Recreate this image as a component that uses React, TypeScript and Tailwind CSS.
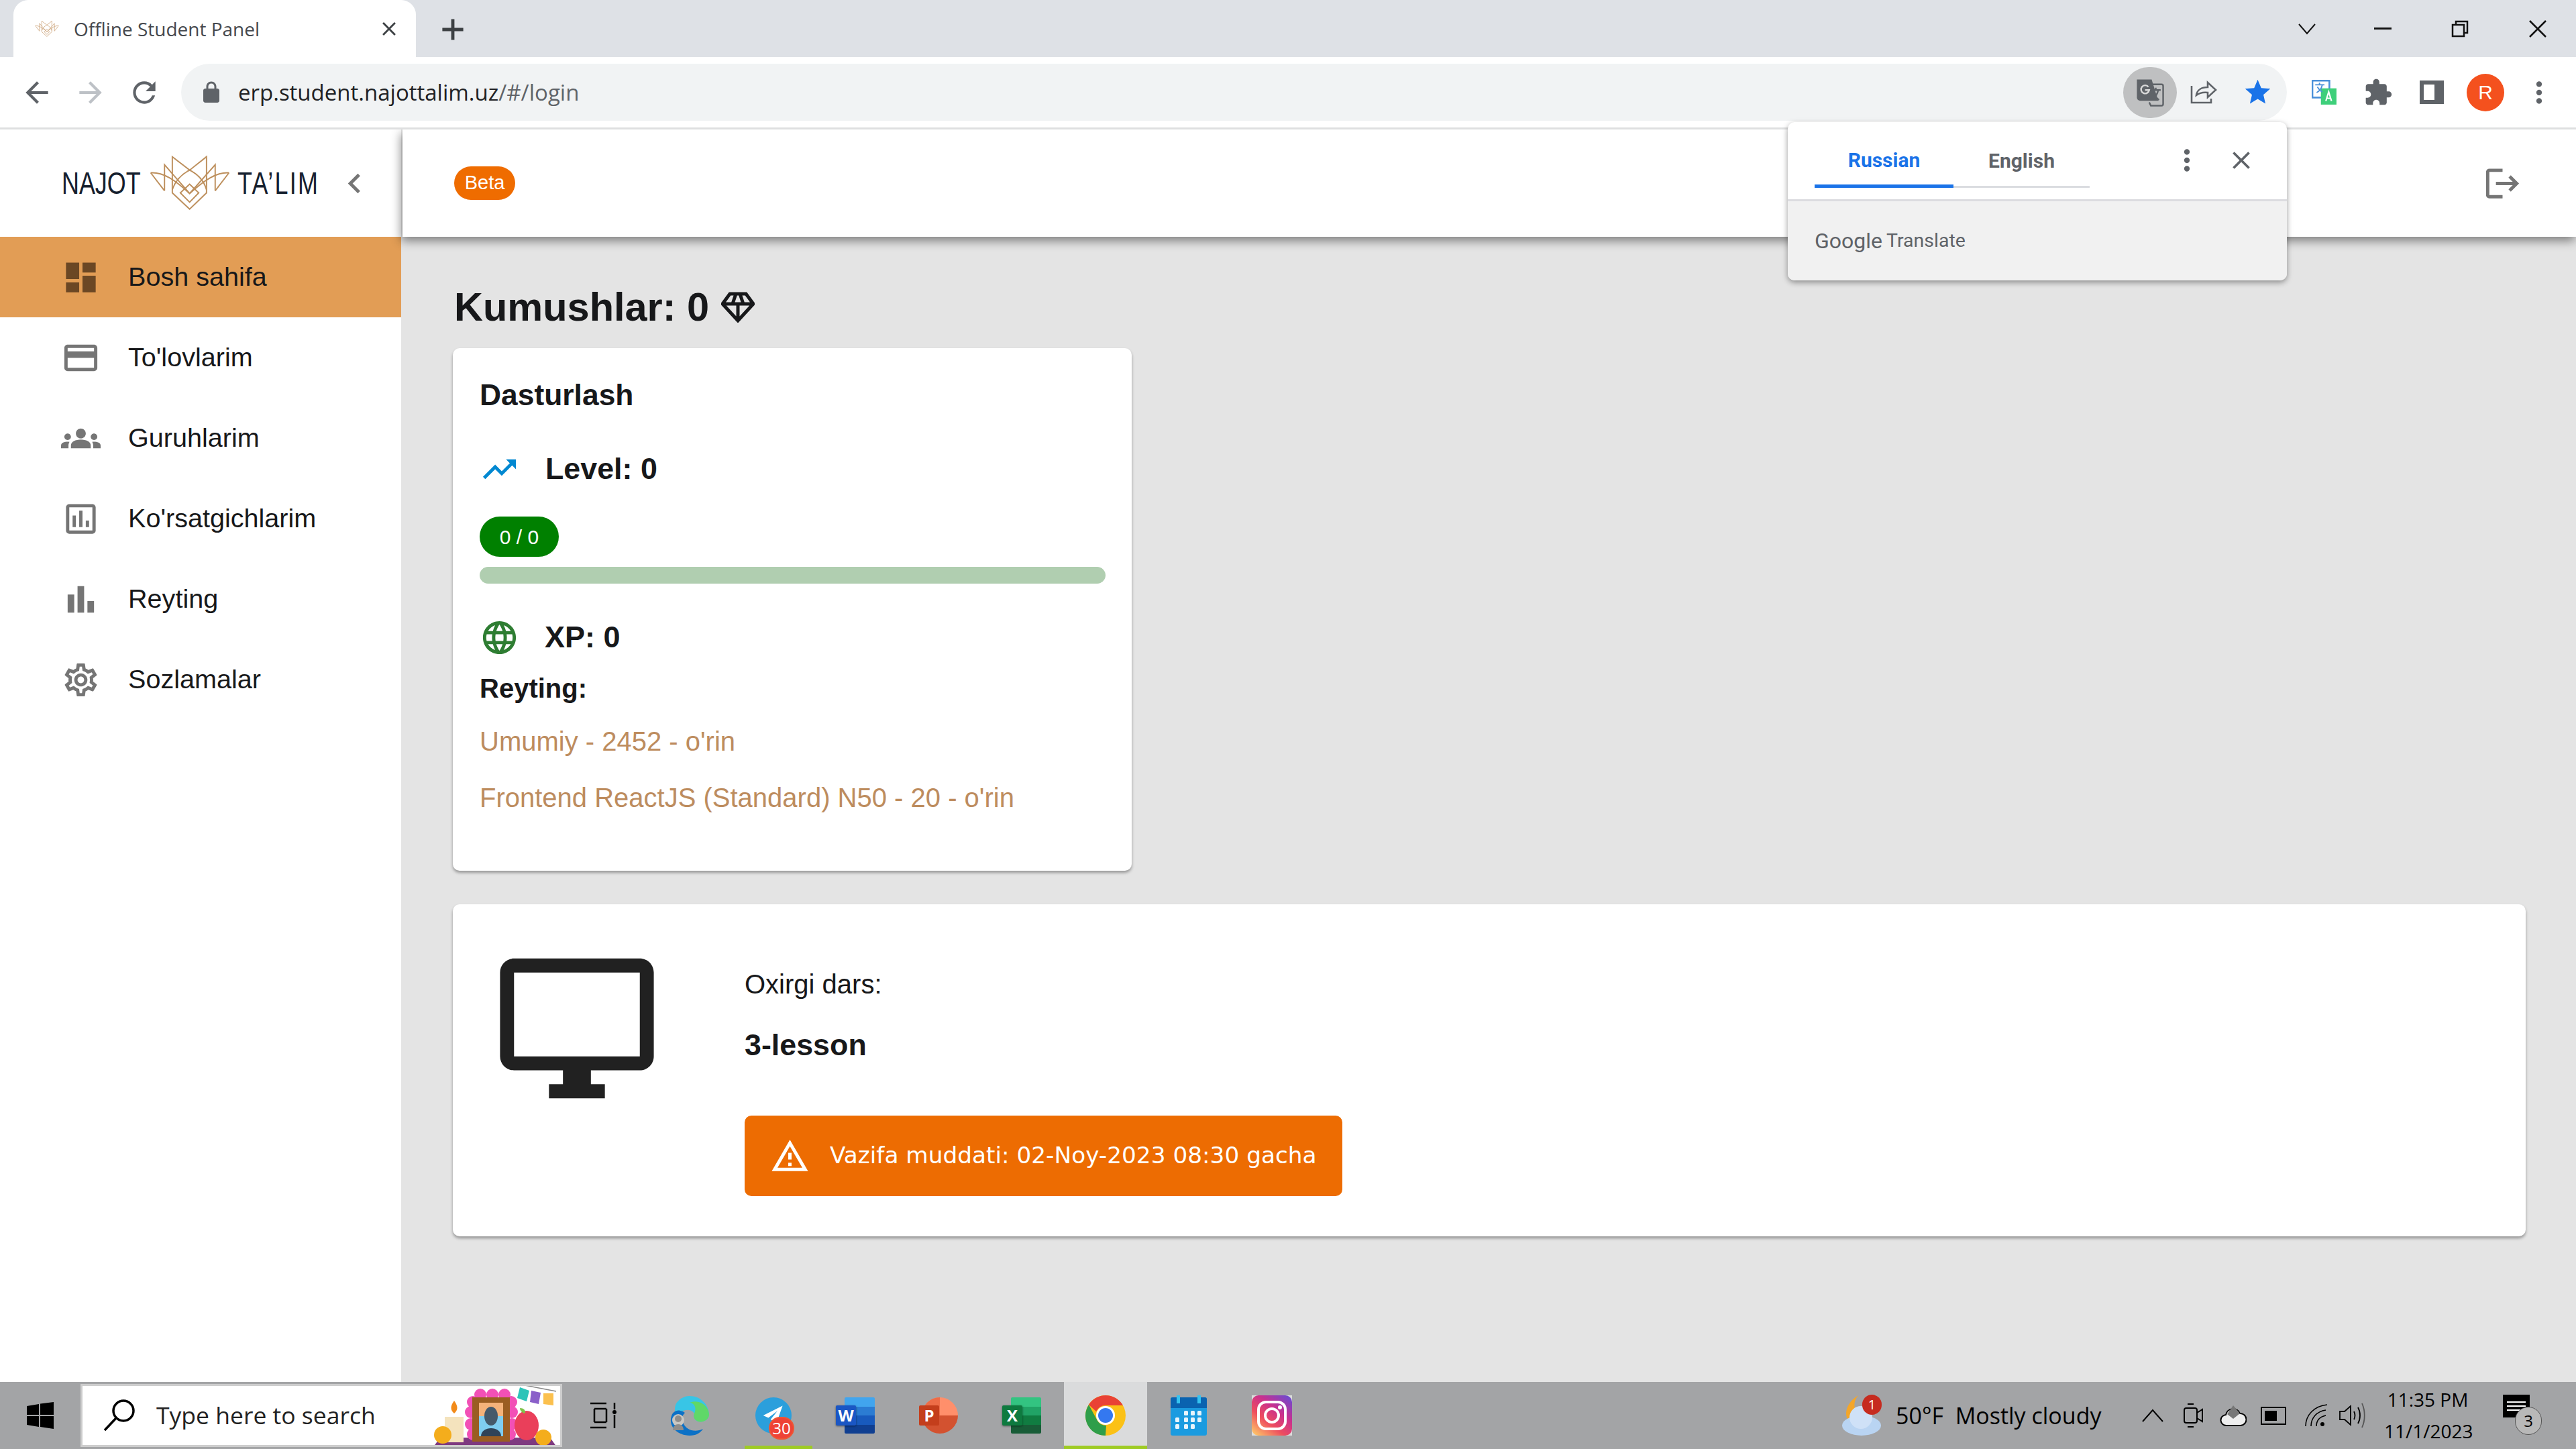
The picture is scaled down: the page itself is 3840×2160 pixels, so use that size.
const sans = "font-['Liberation_Sans',Arial,sans-serif]";
const ui = "font-['Open_Sans','Noto_Sans',sans-serif]";

function Mui({ d, size = 59, className = "" }: { d: string; size?: number; className?: string }) {
  return (
    <svg viewBox="0 0 24 24" width={size} height={size} className={`shrink-0 fill-current ${className}`}>
      <path d={d} />
    </svg>
  );
}

const icons = {
  dashboard: "M3 13h8V3H3v10zm0 8h8v-6H3v6zm10 0h8V11h-8v10zm0-18v6h8V3h-8z",
  card: "M20 4H4c-1.11 0-1.99.89-1.99 2L2 18c0 1.11.89 2 2 2h16c1.11 0 2-.89 2-2V6c0-1.11-.89-2-2-2zm0 14H4v-6h16v6zm0-10H4V6h16v2z",
  groups:
    "M12 12.75c1.63 0 3.07.39 4.24.9 1.08.48 1.76 1.56 1.76 2.73V18H6v-1.61c0-1.18.68-2.26 1.76-2.73 1.17-.52 2.61-.91 4.24-.91zM4 13c1.1 0 2-.9 2-2s-.9-2-2-2-2 .9-2 2 .9 2 2 2zm1.13 1.1c-.37-.06-.74-.1-1.13-.1-.99 0-1.93.21-2.78.58C.48 14.9 0 15.62 0 16.43V18h4.5v-1.61c0-.83.23-1.61.63-2.29zM20 13c1.1 0 2-.9 2-2s-.9-2-2-2-2 .9-2 2 .9 2 2 2zm4 3.43c0-.81-.48-1.53-1.22-1.85-.85-.37-1.79-.58-2.78-.58-.39 0-.76.04-1.13.1.4.68.63 1.46.63 2.29V18H24v-1.57zM12 6c1.66 0 3 1.34 3 3s-1.34 3-3 3-3-1.34-3-3 1.34-3 3-3z",
  assessment: "M19 3H5c-1.1 0-2 .9-2 2v14c0 1.1.9 2 2 2h14c1.1 0 2-.9 2-2V5c0-1.1-.9-2-2-2zm0 16H5V5h14v14zM7 10h2v7H7zm4-3h2v10h-2zm4 6h2v4h-2z",
  bars: "M4 9h4v11H4zm12 4h4v7h-4zm-6-9h4v16h-4z",
  settings:
    "M19.43 12.98c.04-.32.07-.64.07-.98 0-.34-.03-.66-.07-.98l2.11-1.65c.19-.15.24-.42.12-.64l-2-3.46c-.09-.16-.26-.25-.44-.25-.06 0-.12.01-.17.03l-2.49 1c-.52-.4-1.08-.73-1.69-.98l-.38-2.65C14.46 2.18 14.25 2 14 2h-4c-.25 0-.46.18-.49.42l-.38 2.65c-.61.25-1.17.59-1.69.98l-2.49-1c-.06-.02-.12-.03-.18-.03-.17 0-.34.09-.43.25l-2 3.46c-.13.22-.07.49.12.64l2.11 1.65c-.04.32-.07.65-.07.98 0 .33.03.66.07.98l-2.11 1.65c-.19.15-.24.42-.12.64l2 3.46c.09.16.26.25.44.25.06 0 .12-.01.17-.03l2.49-1c.52.4 1.08.73 1.69.98l.38 2.65c.03.24.24.42.49.42h4c.25 0 .46-.18.49-.42l.38-2.65c.61-.25 1.17-.59 1.69-.98l2.49 1c.06.02.12.03.18.03.17 0 .34-.09.43-.25l2-3.46c.12-.22.07-.49-.12-.64l-2.11-1.65zm-1.98-1.71c.04.31.05.52.05.73 0 .21-.02.43-.05.73l-.14 1.13.89.7 1.08.84-.7 1.21-1.27-.51-1.04-.42-.9.68c-.43.32-.84.56-1.25.73l-1.06.43-.16 1.13-.2 1.35h-1.4l-.19-1.35-.16-1.13-1.06-.43c-.43-.18-.83-.41-1.23-.71l-.91-.7-1.06.43-1.27.51-.7-1.21 1.08-.84.89-.7-.14-1.13c-.03-.31-.05-.54-.05-.74s.02-.43.05-.73l.14-1.13-.89-.7-1.08-.84.7-1.21 1.27.51 1.04.42.9-.68c.43-.32.84-.56 1.25-.73l1.06-.43.16-1.13.2-1.35h1.39l.19 1.35.16 1.13 1.06.43c.43.18.83.41 1.23.71l.91.7 1.06-.43 1.27-.51.7 1.21-1.07.85-.89.7.14 1.13zM12 8c-2.21 0-4 1.79-4 4s1.79 4 4 4 4-1.79 4-4-1.79-4-4-4zm0 6c-1.1 0-2-.9-2-2s.9-2 2-2 2 .9 2 2-.9 2-2 2z",
  trending: "M16 6l2.29 2.29-4.88 4.88-4-4L2 16.59 3.41 18l6-6 4 4 6.3-6.29L22 12V6z",
  language:
    "M11.99 2C6.47 2 2 6.48 2 12s4.47 10 9.99 10C17.52 22 22 17.52 22 12S17.52 2 11.99 2zm6.93 6h-2.95c-.32-1.25-.78-2.45-1.38-3.56 1.84.63 3.37 1.91 4.33 3.56zM12 4.04c.83 1.2 1.48 2.53 1.91 3.96h-3.82c.43-1.43 1.08-2.76 1.91-3.96zM4.26 14C4.1 13.36 4 12.69 4 12s.1-1.36.26-2h3.38c-.08.66-.14 1.32-.14 2 0 .68.06 1.34.14 2H4.26zm.82 2h2.95c.32 1.25.78 2.45 1.38 3.56-1.84-.63-3.37-1.9-4.33-3.56zm2.95-8H5.08c.96-1.66 2.49-2.93 4.33-3.56C8.81 5.55 8.35 6.75 8.03 8zM12 19.96c-.83-1.2-1.48-2.53-1.91-3.96h3.82c-.43 1.43-1.08 2.76-1.91 3.96zM14.34 14H9.66c-.09-.66-.16-1.32-.16-2 0-.68.07-1.35.16-2h4.68c.09.65.16 1.32.16 2 0 .68-.07 1.34-.16 2zm.25 5.56c.6-1.11 1.06-2.31 1.38-3.56h2.95c-.96 1.65-2.49 2.93-4.33 3.56zM16.36 14c.08-.66.14-1.32.14-2 0-.68-.06-1.34-.14-2h3.38c.16.64.26 1.31.26 2s-.1 1.36-.26 2h-3.38z",
  desktop: "M21 2H3c-1.1 0-2 .9-2 2v12c0 1.1.9 2 2 2h7v2H8v2h8v-2h-2v-2h7c1.1 0 2-.9 2-2V4c0-1.1-.9-2-2-2zm0 14H3V4h18v12z",
  warning: "M12 5.99L19.53 19H4.47L12 5.99M12 2L1 21h22L12 2zm1 14h-2v2h2v-2zm0-6h-2v4h2v-4z",
  logout: "M17 7l-1.41 1.41L18.17 11H8v2h10.17l-2.58 2.58L17 17l5-5zM4 5h8V3H4c-1.1 0-2 .9-2 2v14c0 1.1.9 2 2 2h8v-2H4V5z",
  chevron: "M15.41 7.41 14 6l-6 6 6 6 1.41-1.41L10.83 12z",
  back: "M20 11H7.83l5.59-5.59L12 4l-8 8 8 8 1.41-1.41L7.83 13H20v-2z",
  forward: "M4 13h12.17l-5.59 5.59L12 20l8-8-8-8-1.41 1.41L16.17 11H4v2z",
  reload: "M17.65 6.35C16.2 4.9 14.21 4 12 4c-4.42 0-7.99 3.58-7.99 8s3.57 8 7.99 8c3.73 0 6.84-2.55 7.73-6h-2.08c-.82 2.33-3.04 4-5.65 4-3.31 0-6-2.69-6-6s2.69-6 6-6c1.66 0 3.14.69 4.22 1.78L13 11h7V4l-2.35 2.35z",
  lock: "M18 8h-1V6c0-2.76-2.24-5-5-5S7 3.24 7 6v2H6c-1.1 0-2 .9-2 2v10c0 1.1.9 2 2 2h12c1.1 0 2-.9 2-2V10c0-1.1-.9-2-2-2zM9 6c0-1.66 1.34-3 3-3s3 1.34 3 3v2H9V6z",
  star: "M12 17.27 18.18 21l-1.64-7.03L22 9.24l-7.19-.61L12 2 9.19 8.63 2 9.24l5.46 4.73L5.82 21z",
  puzzle: "M20.5 11H19V7c0-1.1-.9-2-2-2h-4V3.5C13 2.12 11.88 1 10.5 1S8 2.12 8 3.5V5H4c-1.1 0-1.99.9-1.99 2v3.8H3.5c1.49 0 2.7 1.21 2.7 2.7s-1.21 2.7-2.7 2.7H2V20c0 1.1.9 2 2 2h3.8v-1.5c0-1.49 1.21-2.7 2.7-2.7 1.49 0 2.7 1.21 2.7 2.7V22H17c1.1 0 2-.9 2-2v-4h1.5c1.38 0 2.5-1.12 2.5-2.5S21.88 11 20.5 11z",
  dots: "M12 8c1.1 0 2-.9 2-2s-.9-2-2-2-2 .9-2 2 .9 2 2 2zm0 2c-1.1 0-2 .9-2 2s.9 2 2 2 2-.9 2-2-.9-2-2-2zm0 6c-1.1 0-2 .9-2 2s.9 2 2 2 2-.9 2-2-.9-2-2-2z",
  close: "M19 6.41 17.59 5 12 10.59 6.41 5 5 6.41 10.59 12 5 17.59 6.41 19 12 13.41 17.59 19 19 17.59 13.41 12z",
};

function LogoMark({ width, height, color = "#bd8f5c", sw = 6 }: { width: number; height: number; color?: string; sw?: number }) {
  return (
    <svg viewBox="60 30 378 260" width={width} height={height} fill="none" stroke={color} strokeWidth={sw} className="shrink-0">
      <path d="M248 280 168 205V38l80 62 78-62v167z" />
      <path d="M132 195V75l116 133L366 75v120" />
      <path d="M68 112c55-4 110 30 180 96M430 112c-55-4-110 30-182 96M68 112l64 83M430 112l-64 83" />
      <path d="M168 190c14-40 40-70 80-90 40 20 66 50 78 90" />
      <path d="M248 248l-43-43 43-40 42 40z" />
    </svg>
  );
}

function Tabs() {
  return (
    <div className="h-[85px] bg-[#dee1e6] flex items-end pl-[20px] relative">
      <div className="w-[600px] h-[85px] bg-white rounded-t-[22px] flex items-center pl-[32px] pr-[23px]">
        <LogoMark width={36} height={44} color="#d3b08c" sw={10} />
        <span className={`${ui} ml-[22px] text-[28px] text-[#45484d] flex-1 whitespace-nowrap`}>Offline Student Panel</span>
        <Mui d={icons.close} size={34} className="text-[#3c4043]" />
      </div>
      <div className="ml-[37px] mb-[23px]">
        <svg viewBox="0 0 30 30" width="36" height="36" className="fill-[#3c4043]"><path d="M13 2h4v11h11v4H17v11h-4V17H2v-4h11z" /></svg>
      </div>
      <div className="flex-1" />
      <div className="flex h-[85px] items-center">
        <svg viewBox="0 0 30 20" width="30" height="20" fill="none" stroke="#111" strokeWidth="2" className="mr-[85px]"><path d="M3 3l12 14L27 3" /></svg>
        <div className="w-[26px] h-[3px] bg-[#111] mr-[88px]" />
        <svg viewBox="0 0 28 28" width="28" height="28" fill="none" stroke="#111" strokeWidth="2.5" className="mr-[88px]"><path d="M3 8h17v17H3zM8 8V3h17v17h-5" /></svg>
        <svg viewBox="0 0 28 28" width="28" height="28" fill="none" stroke="#111" strokeWidth="2.5" className="mr-[43px]"><path d="M2 2l24 24M26 2 2 26" /></svg>
      </div>
    </div>
  );
}

function Slot({ children }: { children: React.ReactNode }) {
  return <div className="w-[80px] h-[80px] flex items-center justify-center shrink-0">{children}</div>;
}

function Toolbar() {
  return (
    <div className="h-[105px] bg-white flex items-center px-[15px]">
      <Slot><Mui d={icons.back} size={50} className="text-[#5f6368]" /></Slot>
      <Slot><Mui d={icons.forward} size={50} className="text-[#bdc1c6]" /></Slot>
      <Slot><Mui d={icons.reload} size={50} className="text-[#5f6368]" /></Slot>
      <div className="ml-[15px] w-[3139px] h-[85px] bg-[#f1f3f4] rounded-full flex items-center pl-[27px] pr-[4px]">
        <Mui d={icons.lock} size={36} className="text-[#5f6368]" />
        <span className={`${ui} ml-[22px] text-[33px] text-[#202124] flex-1 whitespace-nowrap`}>
          erp.student.najottalim.uz<span className="text-[#5f6368]">/#/login</span>
        </span>
        <div className="w-[80px] h-[76px] rounded-full bg-[#bfc0c1] flex items-center justify-center">
          <svg viewBox="0 0 36 36" width="44" height="44">
            <path d="M2 2h18l8 26H6a4 4 0 0 1-4-4z" fill="#5f6368" />
            <path d="M17 8h15a2 2 0 0 1 2 2v22a2 2 0 0 1-2 2H19l-2-4" fill="none" stroke="#5f6368" strokeWidth="2" />
            <path d="M16 11a5 5 0 1 0 1 4h-5" fill="none" stroke="#d8d8d8" strokeWidth="2" />
            <path d="M20 15h11M25 12v3M28 15c-1 5-4 9-7 11M22 18c2 4 4 7 7 9" fill="none" stroke="#5f6368" strokeWidth="2" />
          </svg>
        </div>
        <Slot>
          <svg viewBox="0 0 40 36" width="40" height="36" fill="none" stroke="#5f6368" strokeWidth="2.6">
            <path d="M2 8v25h29v-6" />
            <path d="M9 22c1-8 8-12 17-12V3l12 11-12 11v-7c-8-1-13 1-17 4z" />
          </svg>
        </Slot>
        <Slot><Mui d={icons.star} size={45} className="text-[#1a73e8]" /></Slot>
      </div>
      <div className="ml-[16px] flex items-center">
        <Slot>
          <svg viewBox="0 0 36 36" width="38" height="38">
            <path d="M1 1h24v24H1z" fill="none" stroke="#4a90d9" strokeWidth="2.5" />
            <path d="M13 12h22v23H13z" fill="#3ecf7a" />
            <path d="M20 30l4-13 4 13M21.5 26h5" fill="none" stroke="#fff" strokeWidth="2" />
            <path d="M5 7h13M11 4v3M15 7c-1 5-4 9-8 11M8 10c2 3 4 6 7 7" fill="none" stroke="#4a90d9" strokeWidth="1.8" />
          </svg>
        </Slot>
        <Slot><Mui d={icons.puzzle} size={44} className="text-[#5f6368]" /></Slot>
        <Slot>
          <div className="w-[36px] h-[35px] border-[#5f6368] border-[6px] border-r-[14px]" />
        </Slot>
        <Slot>
          <div className={`${sans} w-[56px] h-[56px] rounded-full bg-[#f4511e] text-white text-[30px] flex items-center justify-center`}>R</div>
        </Slot>
        <Slot><Mui d={icons.dots} size={50} className="text-[#5f6368]" /></Slot>
      </div>
    </div>
  );
}

const menu = [
  { label: "Bosh sahifa", icon: icons.dashboard, active: true },
  { label: "To'lovlarim", icon: icons.card },
  { label: "Guruhlarim", icon: icons.groups },
  { label: "Ko'rsatgichlarim", icon: icons.assessment },
  { label: "Reyting", icon: icons.bars },
  { label: "Sozlamalar", icon: icons.settings },
];

function Sidebar() {
  return (
    <aside className="w-[598px] bg-white shrink-0">
      <div className="h-[160px] flex items-center pl-[92px]">
        <div className={`${sans} w-[118px] text-[46px] text-[#15202e] whitespace-nowrap origin-left scale-x-[0.78]`}>NAJOT</div>
        <div className="ml-[12px]"><LogoMark width={122} height={84} /></div>
        <div className={`${sans} ml-[10px] w-[128px] text-[46px] text-[#15202e] whitespace-nowrap tracking-[3px] origin-left scale-x-[0.78]`}>TA’LIM</div>
        <Mui d={icons.chevron} className="text-[#757575] ml-[17px]" />
      </div>
      {menu.map((m) => (
        <div key={m.label} className={`h-[120px] flex items-center pl-[91px] ${m.active ? "bg-[#e29d55]" : ""}`}>
          <Mui d={m.icon} className={m.active ? "text-[#6b4724]" : "text-[#757575]"} />
          <span className={`${sans} ml-[41px] text-[39.6px] text-[#17181a]`}>{m.label}</span>
        </div>
      ))}
    </aside>
  );
}

function SkillCard() {
  return (
    <div className={`w-[1012px] h-[779px] bg-white rounded-[10px] shadow-[0_3px_4px_rgba(0,0,0,0.35)] px-[40px] pt-[40px] text-[#17181a] ${sans}`}>
      <div className="h-[60px] flex items-center text-[44.4px] font-bold">Dasturlash</div>
      <div className="h-[60px] mt-[50px] flex items-center text-[44.8px] font-bold">
        <Mui d={icons.trending} className="text-[#0288d1]" />
        <span className="ml-[39px]">Level: 0</span>
      </div>
      <div className="w-[118px] h-[60px] mt-[41px] bg-[#008000] rounded-full flex items-center justify-center text-white text-[30px]">0 / 0</div>
      <div className="w-[933px] h-[25px] mt-[15px] bg-[#b0ceb0] rounded-full" />
      <div className="h-[60px] mt-[50px] flex items-center text-[45px] font-bold">
        <Mui d={icons.language} className="text-[#2e7d32]" />
        <span className="ml-[38px]">XP: 0</span>
      </div>
      <div className="h-[50px] mt-[21px] flex items-center text-[40px] font-bold">Reyting:</div>
      <div className="h-[50px] mt-[29px] flex items-center text-[40px] text-[#bd8c5e]">Umumiy - 2452 - o'rin</div>
      <div className="h-[50px] mt-[34px] flex items-center text-[40px] text-[#bd8c5e]">Frontend ReactJS (Standard) N50 - 20 - o'rin</div>
    </div>
  );
}

function LessonCard() {
  return (
    <div className={`mt-[50px] h-[495px] bg-white rounded-[10px] shadow-[0_3px_4px_rgba(0,0,0,0.35)] flex pl-[60px] pt-[60px] ${sans} text-[#17181a]`}>
      <Mui d={icons.desktop} size={250} className="text-[#212121]" />
      <div className="ml-[125px] pt-[34px]">
        <div className="h-[50px] flex items-center text-[40px]">Oxirgi dars:</div>
        <div className="h-[50px] mt-[41px] flex items-center text-[44.8px] font-bold">3-lesson</div>
        <div className="mt-[80px] w-[891px] h-[120px] bg-[#ed6c02] rounded-[10px] flex items-center pl-[38px] text-white">
          <Mui d={icons.warning} />
          <span className="ml-[30px] font-['DejaVu_Sans',sans-serif] text-[34.3px] whitespace-nowrap">Vazifa muddati: 02-Noy-2023 08:30 gacha</span>
        </div>
      </div>
    </div>
  );
}

function Main() {
  return (
    <main className="flex-1 bg-[#e4e4e4] ml-[2px] flex flex-col">
      <div className="h-[160px] bg-white shadow-[-2px_6px_14px_rgba(0,0,0,0.45)] flex items-center pl-[77px] pr-[80px] relative">
        <div className={`${sans} w-[91px] h-[50px] rounded-full bg-[#ef6c00] text-white text-[29px] flex items-center justify-center`}>Beta</div>
        <div className="flex-1" />
        <Mui d={icons.logout} className="text-[#757575]" />
      </div>
      <div className="pl-[75px] pr-[75px] pt-[79px]">
        <div className={`${sans} h-[52px] flex items-center pl-[2px] text-[59.5px] font-bold text-[#17181a]`}>
          Kumushlar: 0
          <svg viewBox="0 0 50 46" width="50" height="46" fill="none" stroke="currentColor" strokeWidth="5" className="ml-[18px]">
            <path d="M13 3h24l11 15-23 25L2 18zM2 18h46M25 18v25M17 18l5-15M33 18l-5-15" />
          </svg>
        </div>
        <div className="mt-[35px]"><SkillCard /></div>
        <LessonCard />
      </div>
    </main>
  );
}

function TranslatePopup() {
  return (
    <div className="absolute left-[2665px] top-[182px] w-[744px] h-[236px] rounded-[10px] bg-white shadow-[0_3px_8px_rgba(0,0,0,0.4)] overflow-hidden z-10">
      <div className="h-[118px] border-b-[3px] border-[#dcdce0] pl-[40px] flex">
        <div className="w-[410px] relative border-b-[3px] border-[#dadce0] h-[98px] font-['Roboto',sans-serif] font-bold text-[30px] flex">
          <div className="w-[207px] border-b-[5px] border-[#1a73e8] -mb-[3px] text-[#1a73e8] flex items-center justify-center pt-[20px]">Russian</div>
          <div className="w-[203px] text-[#5f6368] flex items-center justify-center pt-[20px]">English</div>
        </div>
        <div className="ml-[120px] mt-[32px]"><Mui d={icons.dots} size={50} className="text-[#5f6368]" /></div>
        <div className="ml-[34px] mt-[35px]"><Mui d={icons.close} size={44} className="text-[#5f6368]" /></div>
      </div>
      <div className="h-[118px] bg-[#f1f1f1] pl-[40px] flex items-center text-[#5f6368] font-['Roboto',sans-serif] whitespace-nowrap">
        <span className="text-[32px]">Google</span>
        <span className="ml-[6px] text-[28.5px]">Translate</span>
      </div>
    </div>
  );
}

function Edge() {
  return (
    <svg viewBox="0 0 60 60" width="60" height="60">
      <path d="M30 1c16 0 28 12 29 27 0 8-8 13-16 11-6-2-8-7-6-12-4-7-16-7-22 0C8 34 6 20 10 12 15 5 22 1 30 1z" fill="#38c5e6" />
      <path d="M59 28c0 8-8 13-16 11-6-2-8-7-6-12 4-8 0-16-7-16 14-6 28 4 29 17z" fill="#5fd868" />
      <path d="M4 28c-8 18 8 32 26 32 10 0 16-4 20-10-12 6-26 2-30-10-2-6-1-10 3-14C14 20 8 22 4 28z" fill="#0c71c6" />
      <circle cx="13" cy="37" r="9" fill="#c9c7c2" /><circle cx="13" cy="35" r="5" fill="#8f8d8a" /><path d="M5 52c0-12 16-12 16 0z" fill="#8f8d8a" />
    </svg>
  );
}

function Telegram() {
  return (
    <div className="relative w-[60px] h-[60px]">
      <div className="absolute left-[4px] top-[3px] w-[54px] h-[54px] rounded-full bg-[#2b9fdc] flex items-center justify-center">
        <svg viewBox="0 0 40 40" width="34" height="34"><path d="M36 3 2 20l9 4 16-12-12 15 10 7z" fill="#fff" /></svg>
      </div>
      <div className="absolute left-[24px] top-[32px] w-[38px] h-[34px] rounded-full bg-[#ee4236] border-2 border-[#e53] text-white text-[24px] font-['Open_Sans',sans-serif] flex items-center justify-center">30</div>
    </div>
  );
}

function Office({ letter, light, mid, dark, deep, tile }: { letter: string; light: string; mid: string; dark: string; deep: string; tile: string }) {
  return (
    <div className="relative w-[60px] h-[54px]">
      <div className="absolute left-[13px] top-0 w-[45px] h-[54px] rounded-[2px] overflow-hidden flex flex-col">
        <div className="flex-1" style={{ background: light }} />
        <div className="flex-1" style={{ background: mid }} />
        <div className="flex-1" style={{ background: dark }} />
        <div className="flex-1" style={{ background: deep }} />
      </div>
      <div className="absolute left-0 top-[12px] w-[30px] h-[30px] rounded-[2px] text-white font-bold text-[24px] font-['Open_Sans',sans-serif] flex items-center justify-center shadow-[0_1px_3px_rgba(0,0,0,0.5)]" style={{ background: tile }}>{letter}</div>
    </div>
  );
}

function PowerPoint() {
  return (
    <div className="relative w-[60px] h-[54px]">
      <div className="absolute left-[4px] top-0 w-[54px] h-[54px] rounded-full overflow-hidden flex flex-col">
        <div className="h-[27px] bg-[#ff8f6b]" />
        <div className="h-[27px] bg-[#d35230]" />
      </div>
      <div className="absolute left-[4px] top-0 w-[27px] h-[27px] bg-[#ed6c47] rounded-tl-full" />
      <div className="absolute left-0 top-[12px] w-[30px] h-[30px] rounded-[2px] bg-[#c43e1c] text-white font-bold text-[24px] font-['Open_Sans',sans-serif] flex items-center justify-center">P</div>
    </div>
  );
}

function Chrome() {
  return (
    <svg viewBox="0 0 60 60" width="60" height="60">
      <circle cx="30" cy="30" r="30" fill="#fbc116" />
      <path d="M30 0a30 30 0 0 1 26 15H30a15 15 0 0 0-14 9L5 14A30 30 0 0 1 30 0z" fill="#e94235" />
      <path d="M5 14l13 24a15 15 0 0 0 13 7L30 60C12 60 0 46 0 30c0-6 2-11 5-16z" fill="#2f9e4a" />
      <circle cx="30" cy="30" r="14" fill="#fff" /><circle cx="30" cy="30" r="11" fill="#3478f0" />
    </svg>
  );
}

function Calendar() {
  return (
    <svg viewBox="0 0 56 60" width="56" height="60">
      <rect x="1" y="3" width="54" height="57" rx="3" fill="#1a9be0" />
      <path d="M1 6a3 3 0 0 1 3-3h48a3 3 0 0 1 3 3v13H1z" fill="#0a63b0" />
      <path d="M10 0h5v12h-5zM41 0h5v12h-5z" fill="#35c3f0" />
      <g fill="#e8f4fb">
        <rect x="21" y="23" width="6" height="7" rx="1.5" /><rect x="31" y="23" width="6" height="7" rx="1.5" /><rect x="41" y="23" width="6" height="7" rx="1.5" />
        <rect x="8" y="33" width="6" height="7" rx="1.5" /><rect x="21" y="33" width="6" height="7" rx="1.5" /><rect x="31" y="33" width="6" height="7" rx="1.5" /><rect x="41" y="33" width="6" height="7" rx="1.5" />
        <rect x="8" y="43" width="6" height="7" rx="1.5" /><rect x="21" y="43" width="6" height="7" rx="1.5" /><rect x="31" y="43" width="6" height="7" rx="1.5" />
      </g>
    </svg>
  );
}

function Instagram() {
  return (
    <div className="w-[60px] h-[60px] bg-[#dcdcdc]">
      <svg viewBox="0 0 60 60" width="60" height="60">
        <defs>
          <linearGradient id="ig" x1="0.1" y1="1" x2="0.9" y2="0">
            <stop offset="0" stopColor="#fdc468" /><stop offset="0.35" stopColor="#ee4d5f" /><stop offset="0.65" stopColor="#c9308e" /><stop offset="1" stopColor="#6d4bd0" />
          </linearGradient>
        </defs>
        <rect width="60" height="60" rx="10" fill="url(#ig)" />
        <rect x="10" y="10" width="40" height="40" rx="11" fill="none" stroke="#fff" strokeWidth="4" />
        <circle cx="30" cy="30" r="10" fill="none" stroke="#fff" strokeWidth="4" />
        <circle cx="42" cy="18" r="3" fill="#fff" />
      </svg>
    </div>
  );
}

function SearchArt() {
  return (
    <svg viewBox="0 0 193 94" width="193" height="94" className="shrink-0">
      <path d="M4 94l10-14h164l10 14z" fill="#7e3a80" />
      <rect x="21" y="49" width="28" height="38" fill="#f4e3bd" />
      <path d="M35 25c6 8 6 14 0 19-6-5-6-11 0-19z" fill="#f28b1a" />
      <g fill="#f250b6">
        <circle cx="74" cy="16" r="9" /><circle cx="92" cy="16" r="9" /><circle cx="110" cy="16" r="9" /><circle cx="120" cy="27" r="9" />
        <circle cx="63" cy="27" r="9" /><circle cx="60" cy="42" r="9" /><circle cx="121" cy="42" r="9" /><circle cx="60" cy="60" r="9" /><circle cx="121" cy="60" r="9" /><circle cx="63" cy="75" r="9" /><circle cx="118" cy="75" r="9" />
      </g>
      <rect x="62" y="20" width="56" height="66" fill="#9a5d22" />
      <rect x="72" y="28" width="36" height="50" fill="#7fcdf0" />
      <rect x="72" y="28" width="36" height="20" fill="#f4b27a" />
      <ellipse cx="90" cy="48" rx="10" ry="14" fill="#45596a" />
      <path d="M75 78c0-16 30-16 30 0z" fill="#2f4358" />
      <ellipse cx="143" cy="62" rx="18" ry="22" fill="#ea3f5a" />
      <path d="M139 44c-4-2-6-5-6-8 6 0 8 3 8 7z" fill="#7fc24a" />
      <circle cx="18" cy="76" r="13" fill="#f4ad1c" /><circle cx="168" cy="80" r="12" fill="#f4ad1c" />
      <path d="M130 0l57 11" stroke="#888" strokeWidth="1.5" fill="none" />
      <path d="M133 5l14 5-4 16-14-5z" fill="#2dc4b8" /><path d="M150 10l14 3-3 17-13-3z" fill="#8a5fc9" /><path d="M168 14h15v18l-15-2z" fill="#fbc04e" />
    </svg>
  );
}

function Taskbar() {
  const apps = [
    { key: "edge", el: <Edge /> },
    { key: "tg", el: <Telegram />, bar: true },
    { key: "word", el: <Office letter="W" light="#41a5ee" mid="#2b7cd3" dark="#185abd" deep="#103f91" tile="#1a56c4" /> },
    { key: "ppt", el: <PowerPoint /> },
    { key: "xls", el: <Office letter="X" light="#33c481" mid="#21a366" dark="#107c41" deep="#185c37" tile="#0e7a3f" /> },
    { key: "chrome", el: <Chrome />, active: true, bar: true },
    { key: "cal", el: <Calendar /> },
    { key: "ig", el: <Instagram /> },
  ];
  return (
    <footer className="h-[100px] bg-[#a3a4a6] flex items-stretch">
      <div className="w-[120px] flex items-center justify-center">
        <svg viewBox="0 0 40 40" width="40" height="40" className="fill-black"><path d="M0 6l18-3v16H0zM20 2.6 40 0v19H20zM0 21h18v16L0 34zM20 21h20v19l-20-3z" /></svg>
      </div>
      <div className="w-[718px] mt-[3px] mb-[3px] bg-white border-[3px] border-[#cdcdcd] flex items-center pl-[30px] overflow-hidden">
        <svg viewBox="0 0 50 50" width="50" height="50" fill="none" stroke="#000" strokeWidth="3.5" className="shrink-0"><circle cx="31" cy="18" r="15" /><path d="M20 29 3 47" /></svg>
        <span className={`${ui} ml-[30px] text-[35.5px] text-[#222] flex-1 whitespace-nowrap`}>Type here to search</span>
        <SearchArt />
      </div>
      <div className="w-[128px] flex items-center justify-center pr-[4px]">
        <svg viewBox="0 0 42 40" width="42" height="40" fill="none" stroke="#000" strokeWidth="2.5"><path d="M1 2h24M7 10H25M7 10v20M25 10v20M7 30H25M1 38h24M37 1v10M37 19v20" /><circle cx="37" cy="15" r="3" fill="#000" stroke="none" /></svg>
      </div>
      {apps.map((a) => (
        <div key={a.key} className={`w-[124px] relative flex items-center justify-center ${a.active ? "bg-[#dadbdc]" : ""}`}>
          {a.el}
          {a.bar && <div className={`absolute bottom-0 h-[5px] bg-[#9ecb24] ${a.active ? "inset-x-0" : "left-[20px] w-[101px]"}`} />}
        </div>
      ))}
      <div className="flex-1" />
      <div className={`${ui} w-[1096px] flex items-center text-black shrink-0`}>
        <div className="relative w-[62px] h-[62px] shrink-0">
          <svg viewBox="0 0 62 62" width="62" height="62">
            <path d="M26 1c-8 10-8 22 4 30l-18 8C4 30 8 12 26 1z" fill="#f4a62a" />
            <ellipse cx="31" cy="46" rx="29" ry="15" fill="#b9d4f2" />
            <circle cx="30" cy="34" r="17" fill="#cfe1f7" />
          </svg>
          <div className="absolute left-[32px] top-0 w-[29px] h-[30px] rounded-full bg-[#c62b1f] text-white text-[20px] flex items-center justify-center">1</div>
        </div>
        <span className="ml-[20px] w-[304px] text-[34px] whitespace-pre">50°F  Mostly cloudy</span>
        <svg viewBox="0 0 32 20" width="32" height="20" fill="none" stroke="#000" strokeWidth="2" className="ml-[63px] shrink-0"><path d="M1 19 16 2l15 17" /></svg>
        <svg viewBox="0 0 30 36" width="30" height="36" fill="none" stroke="#000" strokeWidth="2" className="ml-[30px] shrink-0"><rect x="1" y="7" width="19" height="22" rx="3" /><path d="M20 14l8-5v18l-8-5M6 1h9M6 35h9" /></svg>
        <svg viewBox="0 0 40 34" width="40" height="34" className="ml-[24px] shrink-0"><path d="M10 32a8 8 0 0 1-1-16 11 11 0 0 1 21-2 9 9 0 0 1 1 18z" fill="#eee" stroke="#000" strokeWidth="2" /><path d="M11 15 20 2l10 12-10 8z" fill="#777" /></svg>
        <div className="ml-[21px] w-[38px] h-[27px] border-2 border-black p-[4px] pr-[12px] shrink-0"><div className="w-full h-full bg-black" /></div>
        <svg viewBox="0 0 36 36" width="36" height="36" fill="none" stroke="#000" strokeWidth="1.6" className="ml-[27px] shrink-0"><path d="M2 34C2 18 14 4 34 2M10 34c0-12 8-22 22-24M18 34c0-8 5-14 14-16" /><circle cx="27" cy="31" r="3" fill="#000" stroke="none" /></svg>
        <svg viewBox="0 0 40 40" width="40" height="40" fill="none" stroke="#000" strokeWidth="1.8" className="ml-[16px] shrink-0"><path d="M1 14h7l9-8v28l-9-8H1z" /><path d="M22 14c2 4 2 8 0 12M28 8c4 7 4 17 0 24" /><path d="M34 2c5 11 5 25 0 36" stroke="#555" /></svg>
        <div className="ml-[27px] w-[130px] text-[28px] text-center leading-[47px] whitespace-nowrap shrink-0">
          <div>11:35 PM</div>
          <div>11/1/2023</div>
        </div>
        <div className="ml-[47px] relative w-[60px] h-[62px] shrink-0">
          <div className="absolute left-0 top-0 w-[40px] h-[34px] bg-black flex flex-col justify-center gap-[4px] px-[6px]">
            <div className="h-[2px] bg-white" /><div className="h-[2px] bg-white" /><div className="h-[2px] bg-white" />
          </div>
          <div className="absolute left-[18px] top-[18px] w-[40px] h-[42px] rounded-full bg-[#b8b8b8] border border-[#555] text-[24px] flex items-center justify-center">3</div>
        </div>
      </div>
    </footer>
  );
}

export default function App() {
  return (
    <div className="w-[3840px] h-[2160px] relative overflow-hidden flex flex-col bg-[#e4e4e4]">
      <Tabs />
      <Toolbar />
      <div className="h-[3px] bg-[#dedfe0]" />
      <div className="flex h-[1867px] overflow-hidden">
        <Sidebar />
        <Main />
      </div>
      <Taskbar />
      <TranslatePopup />
    </div>
  );
}
